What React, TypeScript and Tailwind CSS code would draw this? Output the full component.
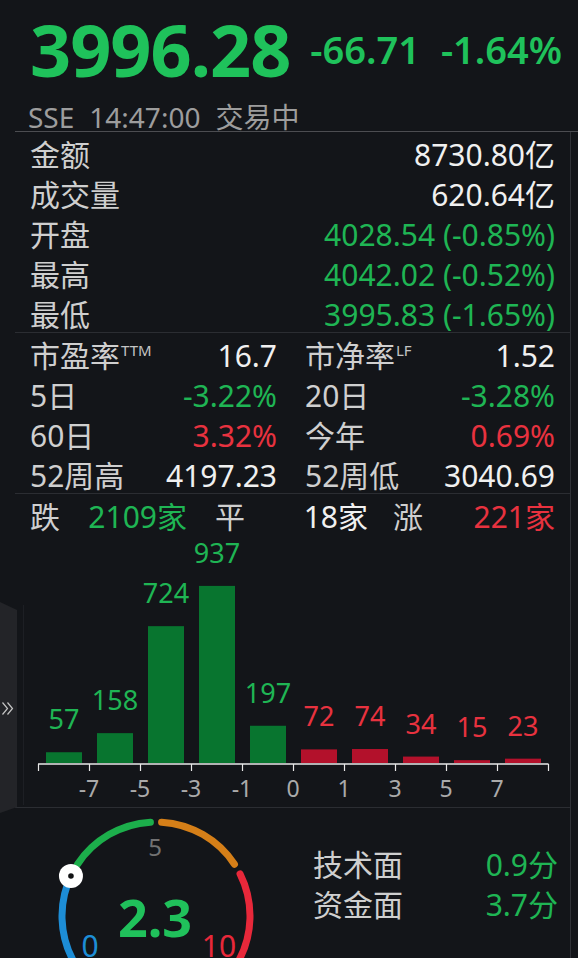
import React from 'react';

const FONT = '"Noto Sans","Noto Sans CJK SC",sans-serif';
const GREEN = '#1fb554';
const RED = '#e8323f';

const bars: { v: number; red?: boolean }[] = [
  { v: 57 },
  { v: 158 },
  { v: 724 },
  { v: 937 },
  { v: 197 },
  { v: 72, red: true },
  { v: 74, red: true },
  { v: 34, red: true },
  { v: 15, red: true },
  { v: 23, red: true },
];

const tickLabels = ['-7', '-5', '-3', '-1', '0', '1', '3', '5', '7'];

function polar(cx: number, cy: number, r: number, deg: number) {
  const a = (deg * Math.PI) / 180;
  return [cx + r * Math.sin(a), cy - r * Math.cos(a)];
}

function arc(cx: number, cy: number, r: number, a0: number, a1: number) {
  const [x0, y0] = polar(cx, cy, r, a0);
  const [x1, y1] = polar(cx, cy, r, a1);
  const large = a1 - a0 > 180 ? 1 : 0;
  return `M${x0} ${y0} A${r} ${r} 0 ${large} 1 ${x1} ${y1}`;
}

function Chart() {
  return (
    <svg width={555} height={273} viewBox="15 534 555 273" className="block" style={{ fontFamily: FONT }}>
      <line x1={23.5} y1={605} x2={23.5} y2={805} stroke="#1d1f24" />
      {bars.map((b, i) => {
        const x = 46 + 51 * i;
        const h = Math.max(2, b.v * 0.189);
        const top = 763 - h;
        return (
          <g key={i}>
            <rect x={x} y={top} width={36} height={h} fill={b.red ? '#b3112b' : '#08752f'} />
            <text x={x + 18} y={top - 23} textAnchor="middle" fontSize={27} fill={b.red ? RED : GREEN}>
              {b.v}
            </text>
          </g>
        );
      })}
      <line x1={38} y1={764} x2={548.5} y2={764} stroke="#e8e8e8" strokeWidth={1.5} />
      {Array.from({ length: 11 }).map((_, i) => (
        <line key={i} x1={38.5 + 51 * i} y1={764} x2={38.5 + 51 * i} y2={771} stroke="#e8e8e8" strokeWidth={1.2} />
      ))}
      {tickLabels.map((t, i) => (
        <text key={t + i} x={89 + 51 * i} y={797} textAnchor="middle" fontSize={23} fill="#aaaaaa">
          {t}
        </text>
      ))}
    </svg>
  );
}

function Gauge() {
  const cx = 156;
  const cy = 916;
  const r = 94;
  const g = 3.4;
  const segs = [
    { a0: -120, a1: -60 - g, c: '#1d8dd6' },
    { a0: -60 + g, a1: 0 - g, c: '#1cae4b' },
    { a0: 0 + g, a1: 60 - g, c: '#d57f18' },
    { a0: 60 + g, a1: 120, c: '#e8283a' },
  ];
  const [dx, dy] = polar(cx, cy, r, -120 + 2.3 * 24);
  return (
    <svg width={285} height={150} viewBox="15 808 285 150" className="block shrink-0" style={{ fontFamily: FONT }}>
      {segs.map((s, i) => (
        <path key={i} d={arc(cx, cy, r, s.a0, s.a1)} stroke={s.c} strokeWidth={7} fill="none" strokeLinecap="round" />
      ))}
      <text x={155} y={856} textAnchor="middle" fontSize={24} fill="#727272">
        5
      </text>
      <text x={90} y={957} textAnchor="middle" fontSize={30} fill="#1d8dd6">
        0
      </text>
      <text x={219} y={957} textAnchor="middle" fontSize={30} fill="#e8283a">
        10
      </text>
      <text x={155} y={937} textAnchor="middle" fontSize={52} fontWeight={700} fill="#20c15b">
        2.3
      </text>
      <circle cx={dx} cy={dy} r={12} fill="#ffffff" />
      <circle cx={dx} cy={dy} r={2.8} fill="#111214" />
    </svg>
  );
}

function Row({ label, value, color }: { label: string; value: string; color: string }) {
  return (
    <div className="h-[40px] flex justify-between leading-[46px]">
      <span className="text-[#cfcfcf]">{label}</span>
      <span style={{ color }}>{value}</span>
    </div>
  );
}

function Cell({ label, sup, value, color }: { label: string; sup?: string; value: string; color: string }) {
  return (
    <div className="h-[40px] flex justify-between leading-[46px]">
      <span className="text-[#cfcfcf] flex items-start">
        {label}
        {sup && <span className="text-[15px] leading-[15px] mt-[10px] ml-[1px] text-[#c4c4c4]">{sup}</span>}
      </span>
      <span style={{ color }}>{value}</span>
    </div>
  );
}

export default function App() {
  return (
    <div className="w-[578px] h-[958px] bg-[#131519] overflow-hidden relative" style={{ fontFamily: FONT }}>
      {/* header */}
      <div className="h-[131px] pl-[30px] flex flex-col">
        <div className="flex items-center pt-[13px]">
          <span className="text-[72px] font-bold leading-[72px] tracking-[-1px] text-[#1fc25b]">3996.28</span>
          <span className="ml-[20px] text-[38px] font-semibold leading-[40px] text-[#1fc25b]">-66.71</span>
          <span className="ml-[21px] text-[38px] font-semibold leading-[40px] text-[#1fc25b]">-1.64%</span>
        </div>
        <div className="mt-auto flex gap-[15px] text-[28px] leading-[28px] text-[#9d9d9d]">
          <span className="-ml-[2px]">SSE</span>
          <span>14:47:00</span>
          <span>交易中</span>
        </div>
      </div>
      <div className="ml-[15px] h-px bg-[#4c4d51]" />

      <div className="ml-[15px] w-[556px] h-[826px] border-r border-[#303237] text-[30px]">
        <div className="px-[15px]">
          <Row label="金额" value="8730.80亿" color="#f0f0f0" />
          <Row label="成交量" value="620.64亿" color="#f0f0f0" />
          <Row label="开盘" value="4028.54 (-0.85%)" color={GREEN} />
          <Row label="最高" value="4042.02 (-0.52%)" color={GREEN} />
          <Row label="最低" value="3995.83 (-1.65%)" color={GREEN} />
        </div>
        <div className="h-px bg-[#2b2d32]" />
        <div className="px-[15px] grid grid-cols-[247px_250px] gap-x-[28px]">
          <Cell label="市盈率" sup="TTM" value="16.7" color="#f0f0f0" />
          <Cell label="市净率" sup="LF" value="1.52" color="#f0f0f0" />
          <Cell label="5日" value="-3.22%" color={GREEN} />
          <Cell label="20日" value="-3.28%" color={GREEN} />
          <Cell label="60日" value="3.32%" color={RED} />
          <Cell label="今年" value="0.69%" color={RED} />
          <Cell label="52周高" value="4197.23" color="#f0f0f0" />
          <Cell label="52周低" value="3040.69" color="#f0f0f0" />
        </div>
        <div className="h-px bg-[#2b2d32]" />
        <div className="px-[15px] flex h-[40px] leading-[46px]">
          <div className="w-[157px] flex justify-between">
            <span className="text-[#cfcfcf]">跌</span>
            <span style={{ color: GREEN }}>2109家</span>
          </div>
          <div className="ml-[28px] w-[153px] flex justify-between">
            <span className="text-[#cfcfcf]">平</span>
            <span className="text-[#f0f0f0]">18家</span>
          </div>
          <div className="ml-[25px] w-[162px] flex justify-between">
            <span className="text-[#cfcfcf]">涨</span>
            <span style={{ color: RED }}>221家</span>
          </div>
        </div>
        <Chart />
        <div className="h-px bg-[#2b2d32]" />
        <div className="flex">
          <Gauge />
          <div className="flex-1 pl-[13px] pr-[12px] pt-[34px]">
            <Row label="技术面" value="0.9分" color={GREEN} />
            <Row label="资金面" value="3.7分" color={GREEN} />
          </div>
        </div>
      </div>

      {/* left collapsed tab */}
      <div className="absolute left-0 top-[602px] w-[17px] h-[211px] bg-[#232428] [clip-path:polygon(0_0,100%_8px,100%_205px,0_100%)]" />
      <svg className="absolute left-[1px] top-[701px]" width={13} height={15} viewBox="0 0 13 15">
        <path d="M1.5 1.5 L6.5 7.5 L1.5 13.5" stroke="#c4c4c4" strokeWidth={1.2} fill="none" />
        <path d="M6.5 1.5 L11.5 7.5 L6.5 13.5" stroke="#c4c4c4" strokeWidth={1.2} fill="none" />
      </svg>
    </div>
  );
}
